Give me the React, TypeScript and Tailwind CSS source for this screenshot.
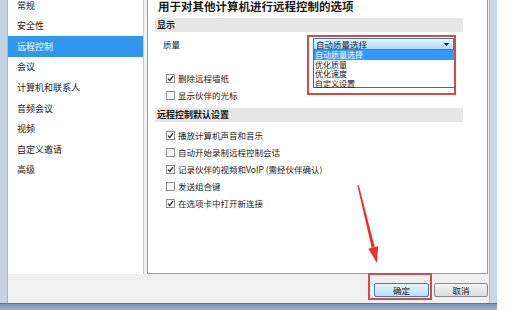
import React from "react";

const font = { fontFamily: '"Noto Sans CJK SC", "Noto Sans", sans-serif' };

const navItems = [
  "常规",
  "安全性",
  "远程控制",
  "会议",
  "计算机和联系人",
  "音频会议",
  "视频",
  "自定义邀请",
  "高级",
];

function Check({ label, checked }: { label: string; checked?: boolean }) {
  return (
    <div className="flex items-center h-[12px] pl-[11px]">
      <div className="w-[9px] h-[9px] border border-[#8e8f8f] bg-gradient-to-br from-[#f4f4f4] to-white flex items-center justify-center">
        {checked && (
          <svg width="7" height="7" viewBox="0 0 7 7">
            <path d="M1 3.6 L2.8 5.4 L6 1.2" fill="none" stroke="#2a2a2a" strokeWidth="1.3" />
          </svg>
        )}
      </div>
      <span className="ml-[3px] text-[8.5px] leading-[12px] text-[#222] whitespace-nowrap">{label}</span>
    </div>
  );
}

export default function App() {
  return (
    <div className="relative w-[512px] h-[310px] bg-white overflow-hidden" style={font}>
      {/* window frame */}
      <div className="w-[497px] h-[310px] flex flex-col bg-gradient-to-r from-[#c3d3e4] via-[#dbe6f1] to-[#c9d8e8]">
        <div className="flex-1 flex flex-col bg-[#f0f0f0] mx-[7px] border-x border-[#a9b8c9]">
          <div className="flex h-[274px] gap-[3px] pr-[1px]">
            {/* SIDEBAR */}
            <div className="w-[136px] bg-white border-r border-[#c9c9c9] overflow-hidden">
              <div className="-mt-[5px]">
                {navItems.map((item, i) => (
                  <div
                    key={item}
                    className={
                      "h-[20.6px] flex items-center pl-[9px] text-[9px] " +
                      (i === 2 ? "bg-[#3196ee] text-white" : "text-[#222]")
                    }
                  >
                    {item}
                  </div>
                ))}
              </div>
            </div>

            {/* MAIN PANEL */}
            <div className="flex-1 bg-white border-x border-b border-[#9c9c9c] pl-[7px] pr-[24px] flex flex-col">
              <div className="h-[13px] pl-[3px] text-[11.5px] leading-[13px] font-bold text-[#1a1a1a] whitespace-nowrap">
                用于对其他计算机进行远程控制的选项
              </div>

              <div className="mt-[5px] h-[14px] bg-[#e6e6e6] pl-[2px] text-[9px] leading-[14px] font-bold text-[#1a1a1a]">
                显示
              </div>

              <div className="mt-[6px] h-[12px] flex items-center">
                <span className="pl-[8px] text-[8.5px] text-[#222]">质量</span>
                <div className="relative ml-auto mr-[9px] w-[141px] h-[12px]">
                  <div className="h-full border border-[#3c7fb1] bg-gradient-to-b from-[#eaf6fd] to-[#a9daf6] flex items-center pl-[2px] pr-[4px]">
                    <span className="text-[8.5px] leading-[10px] text-[#1a1a1a]">自动质量选择</span>
                    <svg className="ml-auto" width="5" height="3" viewBox="0 0 5 3">
                      <path d="M0 0 H5 L2.5 3 Z" fill="#111" />
                    </svg>
                  </div>
                  {/* open list */}
                  <div className="absolute left-0 top-full w-[142px] h-[38px] bg-white border border-[#646464] border-t-0 flex flex-col">
                    <div className="h-[9.5px] bg-[#3399ff] text-white text-[8px] leading-[9.5px] pl-[1px]">自动质量选择</div>
                    <div className="h-[9.5px] text-[#111] text-[8px] leading-[9.5px] pl-[1px]">优化质量</div>
                    <div className="h-[9.5px] text-[#111] text-[8px] leading-[9.5px] pl-[1px]">优化速度</div>
                    <div className="h-[9.5px] text-[#111] text-[8px] leading-[9.5px] pl-[1px]">自定义设置</div>
                  </div>
                  {/* annotation */}
                  <div className="absolute -left-[6px] -top-[3px] w-[149px] h-[60px] border-2 border-[#d24b4b]" />
                </div>
              </div>

              <div className="mt-[22px] flex flex-col gap-[5px]">
                <Check label="删除远程墙纸" checked />
                <Check label="显示伙伴的光标" />
              </div>

              <div className="mt-[7px] h-[14px] bg-[#e6e6e6] pl-[2px] text-[9px] leading-[14px] font-bold text-[#1a1a1a]">
                远程控制默认设置
              </div>

              <div className="mt-[7px] flex flex-col gap-[5px]">
                <Check label="播放计算机声音和音乐" checked />
                <Check label="自动开始录制远程控制会话" />
                <Check label="记录伙伴的视频和VoIP (需经伙伴确认)" checked />
                <Check label="发送组合键" />
                <Check label="在选项卡中打开新连接" checked />
              </div>
            </div>
          </div>

          {/* BUTTONS */}
          <div className="flex justify-end gap-[5px] pt-[9px] pr-[1px]">
            <div className="relative">
              <button className="w-[55px] h-[14px] border border-[#3c7fb1] rounded-[2px] bg-gradient-to-b from-[#e8f5fc] to-[#b9e0f5] text-[8.5px] leading-[12px] text-[#111] flex items-center justify-center">
                确定
              </button>
              <div className="absolute -left-[6px] -top-[10px] w-[64px] h-[27px] border-2 border-[#d24b4b]" />
            </div>
            <button className="w-[54px] h-[14px] border border-[#8a8a8a] rounded-[2px] bg-gradient-to-b from-[#f4f4f4] to-[#dcdcdc] text-[8.5px] leading-[12px] text-[#111] flex items-center justify-center">
              取消
            </button>
          </div>
        </div>
        <div className="h-[7px] bg-gradient-to-b from-[#7b93b3] to-[#9fb4cd] border-t border-[#5f7796]" />
      </div>

      {/* red arrow */}
      <svg className="absolute left-0 top-0 pointer-events-none" width="512" height="310" viewBox="0 0 512 310">
        <polygon points="357.3,185.2 358.7,184.8 374.7,247.1 371.7,247.9" fill="#e8312a" />
        <polygon points="368.3,248.7 378.1,246.3 377,263" fill="#e8312a" />
      </svg>
    </div>
  );
}
